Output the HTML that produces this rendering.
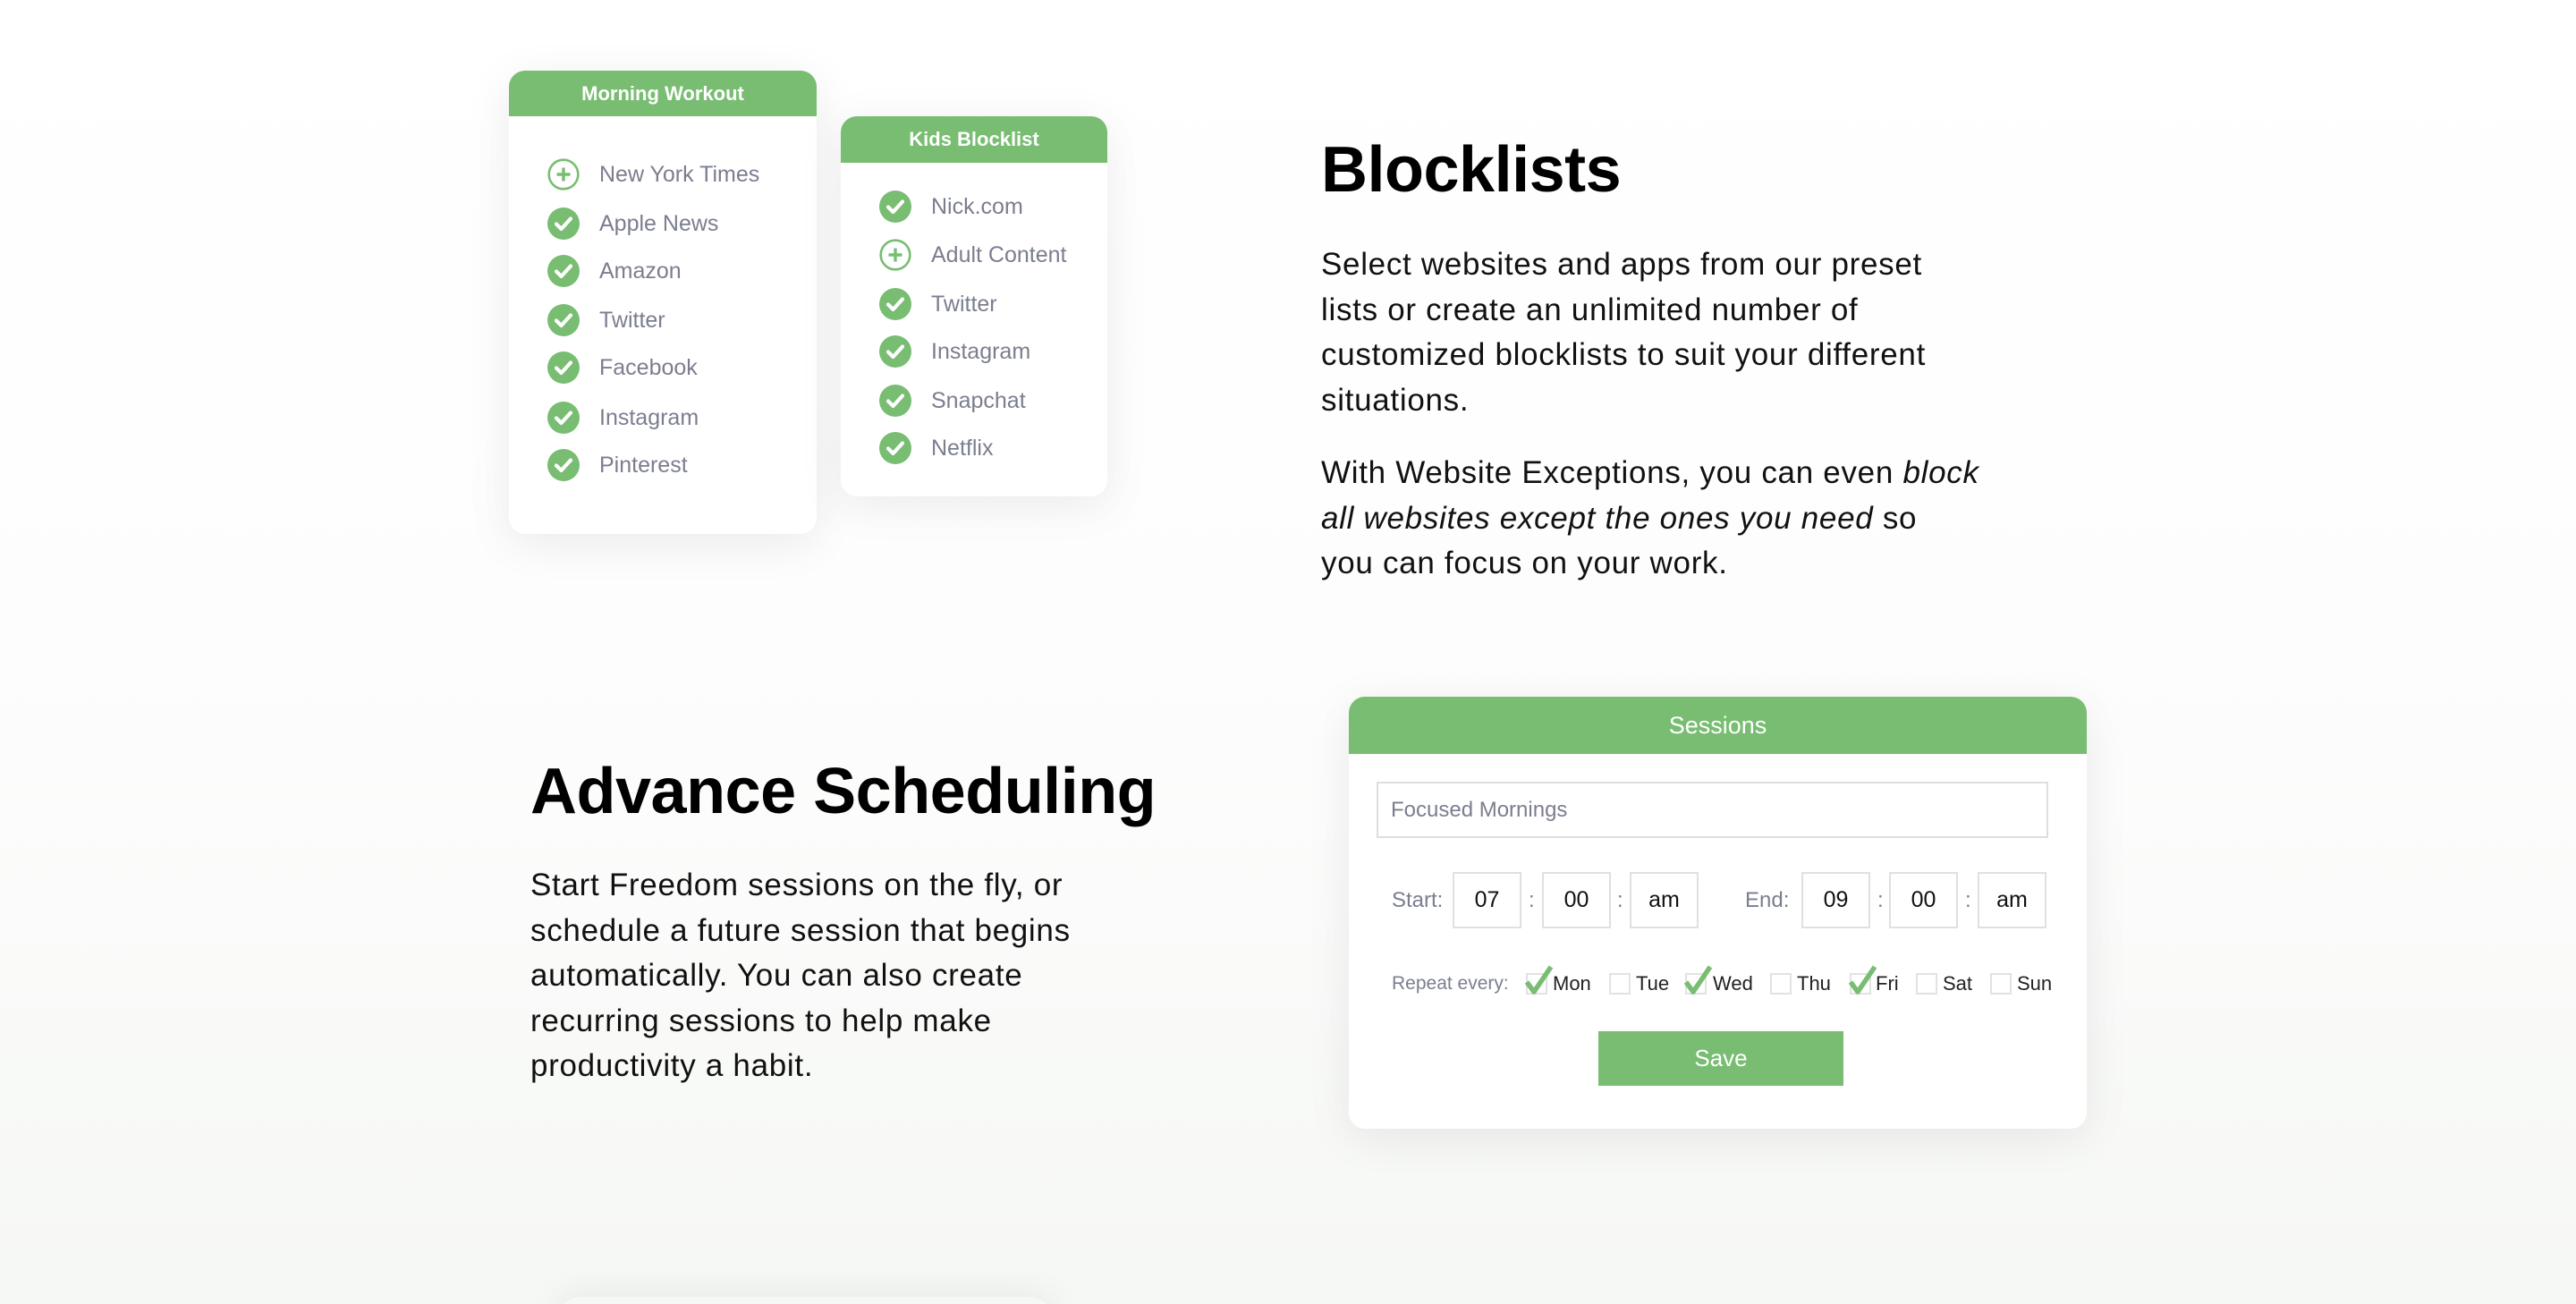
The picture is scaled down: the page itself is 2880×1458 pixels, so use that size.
<!DOCTYPE html>
<html style="overflow:hidden"><head><meta charset="utf-8"><style>
*{margin:0;padding:0;box-sizing:border-box}
html,body{width:2880px;height:1458px;overflow:hidden}
body{position:relative;font-family:"Liberation Sans",sans-serif;background:linear-gradient(#ffffff 0%,#fdfdfd 50%,#f6f8f5 100%)}
.abs{position:absolute}
.card{position:absolute;background:#fff;border-radius:18px;box-shadow:0 10px 50px rgba(0,0,0,0.08);overflow:hidden}
.hd{background:#78bd72;color:#fff;font-weight:bold;text-align:center}
.item{position:absolute;font-size:25px;color:#7b7e8f;white-space:nowrap;line-height:30px}
.ic{position:absolute;width:36px;height:36px}
h2{position:absolute;font-size:72px;font-weight:bold;color:#000;letter-spacing:-0.5px;white-space:nowrap}
.p{position:absolute;font-size:35px;line-height:50.5px;color:#111;white-space:nowrap;letter-spacing:0.7px}
.box{position:absolute;border:2px solid #e0e0e0;background:#fff;font-size:25px;color:#111;text-align:center;line-height:59px;height:63px;width:77px}
.lbl{position:absolute;font-size:24px;color:#7b7e8f;white-space:nowrap}
.cb{position:absolute;width:24px;height:24px;border:2px solid #e2e2e2;top:1088px}
.day{position:absolute;font-size:22px;color:#222;top:1087px}
</style></head><body>

<div class="card" style="left:569px;top:79px;width:344px;height:518px">
  <div class="hd" style="height:51px;line-height:51px;font-size:22px">Morning Workout</div>
</div>
<div class="card" style="left:940px;top:130px;width:298px;height:425px">
  <div class="hd" style="height:52px;line-height:52px;font-size:22px">Kids Blocklist</div>
</div>

<svg width="0" height="0" style="position:absolute">
<defs>
<symbol id="chk" viewBox="0 0 36 36"><circle cx="18" cy="18" r="18" fill="#78bd72"/><path d="M10 18.5 L15.5 24 L26 12.5" fill="none" stroke="#fff" stroke-width="4.2" stroke-linecap="round" stroke-linejoin="round"/></symbol>
<symbol id="plus" viewBox="0 0 36 36"><circle cx="18" cy="18" r="16.3" fill="#fff" stroke="#78bd72" stroke-width="2.6"/><path d="M18 10.5 V25.5 M10.5 18 H25.5" stroke="#78bd72" stroke-width="3.4"/></symbol>
</defs></svg>

<svg class="ic" style="left:612px;top:177px"><use href="#plus"/></svg><div class="item" style="left:670px;top:180px">New York Times</div>
<svg class="ic" style="left:612px;top:232px"><use href="#chk"/></svg><div class="item" style="left:670px;top:235px">Apple News</div>
<svg class="ic" style="left:612px;top:285px"><use href="#chk"/></svg><div class="item" style="left:670px;top:288px">Amazon</div>
<svg class="ic" style="left:612px;top:340px"><use href="#chk"/></svg><div class="item" style="left:670px;top:343px">Twitter</div>
<svg class="ic" style="left:612px;top:393px"><use href="#chk"/></svg><div class="item" style="left:670px;top:396px">Facebook</div>
<svg class="ic" style="left:612px;top:449px"><use href="#chk"/></svg><div class="item" style="left:670px;top:452px">Instagram</div>
<svg class="ic" style="left:612px;top:502px"><use href="#chk"/></svg><div class="item" style="left:670px;top:505px">Pinterest</div>

<svg class="ic" style="left:983px;top:213px"><use href="#chk"/></svg><div class="item" style="left:1041px;top:216px">Nick.com</div>
<svg class="ic" style="left:983px;top:267px"><use href="#plus"/></svg><div class="item" style="left:1041px;top:270px">Adult Content</div>
<svg class="ic" style="left:983px;top:322px"><use href="#chk"/></svg><div class="item" style="left:1041px;top:325px">Twitter</div>
<svg class="ic" style="left:983px;top:375px"><use href="#chk"/></svg><div class="item" style="left:1041px;top:378px">Instagram</div>
<svg class="ic" style="left:983px;top:430px"><use href="#chk"/></svg><div class="item" style="left:1041px;top:433px">Snapchat</div>
<svg class="ic" style="left:983px;top:483px"><use href="#chk"/></svg><div class="item" style="left:1041px;top:486px">Netflix</div>

<h2 style="left:1477px;top:145px;line-height:90px">Blocklists</h2>
<div class="p" style="left:1477px;top:271px">Select websites and apps from our preset<br>lists or create an unlimited number of<br>customized blocklists to suit your different<br>situations.</div>
<div class="p" style="left:1477px;top:504px">With Website Exceptions, you can even <i>block</i><br><i>all websites except the ones you need</i> so<br>you can focus on your work.</div>

<h2 style="left:593px;top:840px;line-height:90px">Advance Scheduling</h2>
<div class="p" style="left:593px;top:965px">Start Freedom sessions on the fly, or<br>schedule a future session that begins<br>automatically. You can also create<br>recurring sessions to help make<br>productivity a habit.</div>

<div class="card" style="left:1508px;top:779px;width:825px;height:483px">
  <div class="hd" style="height:64px;line-height:64px;font-size:27px;font-weight:normal">Sessions</div>
</div>
<div class="abs" style="left:1539px;top:874px;width:751px;height:63px;border:2px solid #dedede;font-size:24px;color:#7b7e8f;line-height:59px;padding-left:14px">Focused Mornings</div>

<div class="lbl" style="left:1556px;top:993px">Start:</div>
<div class="box" style="left:1624px;top:975px">07</div>
<div class="lbl" style="left:1709px;top:993px">:</div>
<div class="box" style="left:1724px;top:975px">00</div>
<div class="lbl" style="left:1808px;top:993px">:</div>
<div class="box" style="left:1822px;top:975px">am</div>
<div class="lbl" style="left:1951px;top:993px">End:</div>
<div class="box" style="left:2014px;top:975px">09</div>
<div class="lbl" style="left:2099px;top:993px">:</div>
<div class="box" style="left:2112px;top:975px">00</div>
<div class="lbl" style="left:2197px;top:993px">:</div>
<div class="box" style="left:2211px;top:975px">am</div>

<div class="lbl" style="left:1556px;top:1088px;font-size:21px">Repeat every:</div>
<div class="cb" style="left:1706px"></div><div class="day" style="left:1736px">Mon</div>
<div class="cb" style="left:1799px"></div><div class="day" style="left:1829px">Tue</div>
<div class="cb" style="left:1884px"></div><div class="day" style="left:1915px">Wed</div>
<div class="cb" style="left:1979px"></div><div class="day" style="left:2009px">Thu</div>
<div class="cb" style="left:2068px"></div><div class="day" style="left:2097px">Fri</div>
<div class="cb" style="left:2142px"></div><div class="day" style="left:2172px">Sat</div>
<div class="cb" style="left:2225px"></div><div class="day" style="left:2255px">Sun</div>
<svg class="abs" style="left:1704px;top:1078px" width="34" height="36"><path d="M3 20 L11 31 L30 3" fill="none" stroke="#78bd72" stroke-width="5.5" stroke-linejoin="round"/></svg>
<svg class="abs" style="left:1882px;top:1078px" width="34" height="36"><path d="M3 20 L11 31 L30 3" fill="none" stroke="#78bd72" stroke-width="5.5" stroke-linejoin="round"/></svg>
<svg class="abs" style="left:2066px;top:1078px" width="34" height="36"><path d="M3 20 L11 31 L30 3" fill="none" stroke="#78bd72" stroke-width="5.5" stroke-linejoin="round"/></svg>

<div class="abs" style="left:1787px;top:1153px;width:274px;height:61px;background:#78bd72;color:#fff;font-size:26px;text-align:center;line-height:61px">Save</div>

<div class="abs" style="left:0;top:1420px;width:2880px;height:38px;overflow:hidden">
  <div class="abs" style="left:620px;top:30px;width:560px;height:60px;border-radius:30px;box-shadow:0 -6px 40px rgba(0,0,0,0.06)"></div>
</div>
</body></html>
